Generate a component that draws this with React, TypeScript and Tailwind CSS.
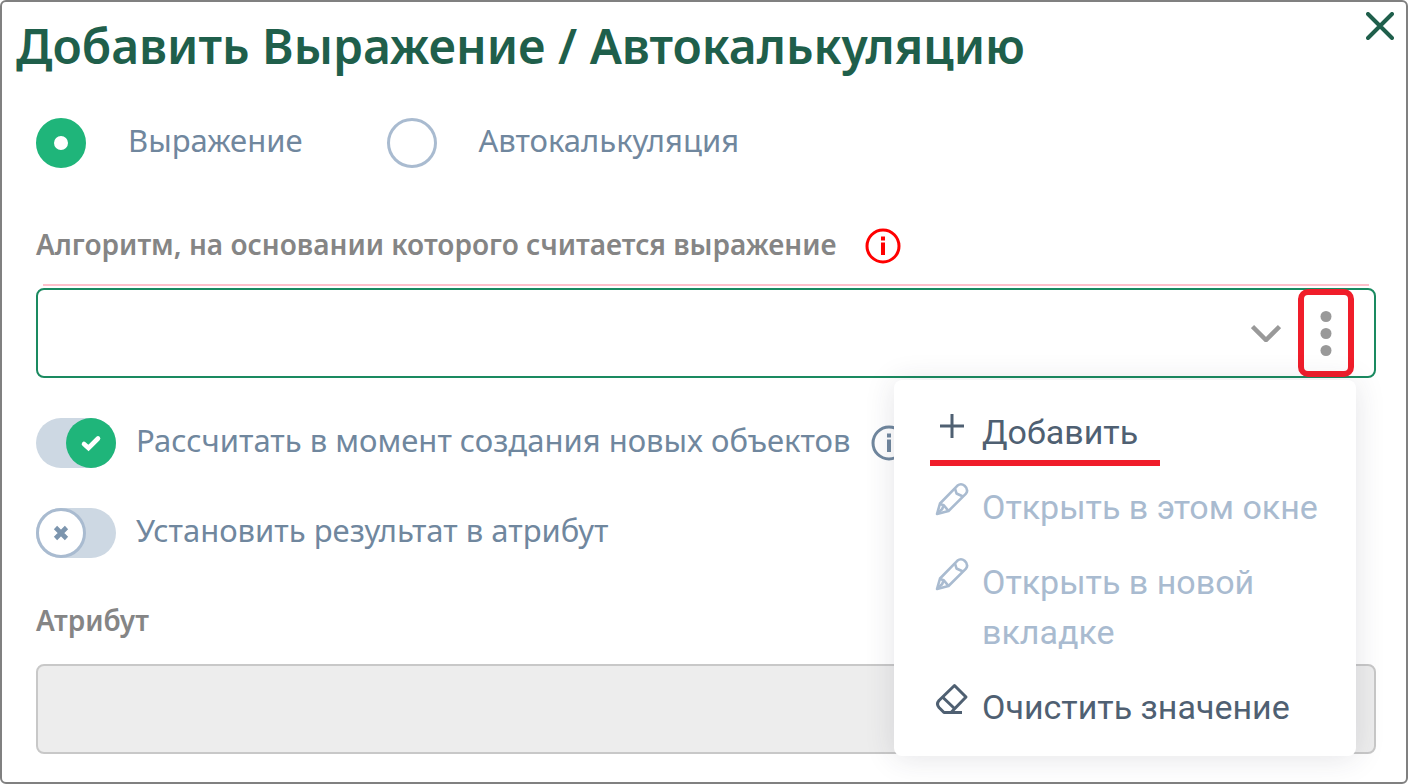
import React, { useState } from 'react';

const InfoIcon: React.FC<{ className: string }> = ({ className }) => (
  <svg viewBox="0 0 36 36" className={className} fill="none" aria-hidden="true">
    <circle cx="18" cy="18" r="16" stroke="currentColor" strokeWidth="3" />
    <path d="M18 14.5V27" stroke="currentColor" strokeWidth="4" />
    <path d="M18 8.5V12.5" stroke="currentColor" strokeWidth="4" />
  </svg>
);

const PlusIcon = () => (
  <svg viewBox="0 0 36 36" className="size-9 shrink-0" fill="none" stroke="currentColor" strokeWidth="3" aria-hidden="true">
    <path d="M18 7V31M6 19H30" />
  </svg>
);

const PencilIcon = () => (
  <svg viewBox="0 0 36 36" className="size-9 shrink-0" fill="none" stroke="currentColor" strokeWidth="2.6" strokeLinejoin="round" aria-hidden="true">
    <path d="M3 32L6 21.5L23.5 3.6Q27 .8 30.6 3.8Q34.8 7.6 32 11.6L14.5 29Z" />
    <path d="M21 6.5L22.5 11.5L29 14.5M6 22L9.8 23.2L14.2 28.6M9.5 23.5L8.2 27L4 31" />
  </svg>
);

const EraserIcon = () => (
  <svg viewBox="0 0 36 36" className="size-9 shrink-0" fill="none" stroke="currentColor" strokeWidth="3" strokeLinejoin="round" aria-hidden="true">
    <path d="M20.5 3.5L32 15L17 30.5H10L5 25.5Q2 22 5 18.5Z" />
    <path d="M9 15.5L20.5 26.5M10 30.5H28" />
  </svg>
);

const MENU = [
  { text: 'Добавить', icon: PlusIcon, disabled: false, marked: true },
  { text: 'Открыть в этом окне', icon: PencilIcon, disabled: true },
  { text: 'Открыть в новой вкладке', icon: PencilIcon, disabled: true },
  { text: 'Очистить значение', icon: EraserIcon, disabled: false },
];

interface RadioProps {
  label: string;
  checked: boolean;
  onChange: () => void;
}

const Radio: React.FC<RadioProps> = ({ label, checked, onChange }) => (
  <label className="flex items-center gap-[42px]">
    <input
      type="radio"
      name="kind"
      checked={checked}
      onChange={onChange}
      className="size-[50px] shrink-0 appearance-none rounded-full border-[3px] border-[#a9bbd0] bg-white checked:border-[18px] checked:border-[#1fb57a]"
    />
    <span className="-mt-1.5 leading-10">{label}</span>
  </label>
);

interface ToggleProps {
  label: string;
  checked: boolean;
  onChange: (value: boolean) => void;
}

const Toggle: React.FC<ToggleProps> = ({ label, checked, onChange }) => (
  <label className="flex items-center gap-5">
    <span className="relative h-[50px] w-20 shrink-0">
      <input
        type="checkbox"
        checked={checked}
        onChange={(e) => onChange(e.target.checked)}
        className="block h-full w-full appearance-none rounded-full bg-[#cdd8e3]"
      />
      {checked ? (
        <svg viewBox="0 0 50 50" className="pointer-events-none absolute top-0 right-0 size-[50px]" fill="none" aria-hidden="true">
          <circle cx="25" cy="25" r="25" fill="#1fb57a" />
          <path d="M18 26L22.5 30L32 20.5" stroke="#fff" strokeWidth="4.6" strokeLinecap="round" />
        </svg>
      ) : (
        <svg viewBox="0 0 50 50" className="pointer-events-none absolute top-0 left-0 size-[50px]" fill="none" aria-hidden="true">
          <circle cx="25" cy="25" r="23.5" fill="#fff" stroke="#a9bbd0" strokeWidth="3" />
          <path d="M19.5 19.5L30.5 30.5M30.5 19.5L19.5 30.5" stroke="#7c95ae" strokeWidth="4.6" />
        </svg>
      )}
    </span>
    <span className="-mt-1.5 leading-10">{label}</span>
  </label>
);

export default function App() {
  const [kind, setKind] = useState('expression');
  const [onCreate, setOnCreate] = useState(true);
  const [toAttribute, setToAttribute] = useState(false);

  return (
    <main className="min-h-screen rounded-md border-2 border-[#808080] bg-white pb-7 font-['Noto_Sans',sans-serif] text-[31px] text-[#70879e]">
      <header className="flex items-start justify-between pt-3 pr-3 pl-3.5">
        <h1 className="text-[48px] leading-16 font-semibold text-[#1f5f4b]">Добавить Выражение / Автокалькуляцию</h1>
        <button type="button" aria-label="Закрыть" className="-mt-0.5 text-[#1f5f4b]">
          <svg viewBox="0 0 28 28" className="size-7" fill="none" stroke="currentColor" strokeWidth="4" strokeLinecap="round">
            <path d="M2 2L26 26M26 2L2 26" />
          </svg>
        </button>
      </header>

      <form className="mt-10 pr-[30px] pl-[34px]">
        <div className="flex gap-21" role="radiogroup">
          <Radio label="Выражение" checked={kind === 'expression'} onChange={() => setKind('expression')} />
          <Radio label="Автокалькуляция" checked={kind === 'auto'} onChange={() => setKind('auto')} />
        </div>

        <div className="mt-15 flex h-9 items-start gap-7">
          <label htmlFor="algorithm" className="text-[28px] leading-8 font-semibold text-[#858585]">
            Алгоритм, на основании которого считается выражение
          </label>
          <InfoIcon className="size-9 shrink-0 text-[#ff0000]" />
        </div>

        <hr className="mx-[7px] mt-5 mb-0.5 border-t-2 border-[#ffc0cb]" />
        <div className="relative">
          <div className="flex h-[90px] items-center rounded-lg border-2 border-[#1a8a60] pr-5">
            <select id="algorithm" className="h-full min-w-0 flex-1 appearance-none bg-transparent px-4 outline-none" />
            <svg viewBox="0 0 30 18" className="pointer-events-none mr-[17px] h-[18px] w-[30px]" fill="none" stroke="#999" strokeWidth="4.5" aria-hidden="true">
              <path d="M1.5 2.5L15 16L28.5 2.5" />
            </svg>
            <button type="button" aria-label="Действия" className="flex h-[88px] w-14 items-center justify-center rounded-[10px] border-6 border-[#f01d2a]">
              <svg viewBox="0 0 12 46" className="h-[46px] w-3" fill="#999">
                <circle cx="6" cy="6.5" r="5.5" />
                <circle cx="6" cy="23.5" r="5.5" />
                <circle cx="6" cy="40.5" r="5.5" />
              </svg>
            </button>
          </div>

          <ul className="absolute top-full right-5 z-10 mt-0.5 flex w-[462px] flex-col gap-[25px] rounded-lg bg-white pt-[27px] pr-7 pb-6 pl-10 font-[Roboto,sans-serif] text-[34px] leading-[50px] text-[#4f6072] shadow-[0_2px_30px_rgba(50,50,70,0.13)]">
            {MENU.map(({ text, icon: Icon, disabled, marked }) => (
              <li key={text} className="relative">
                <button type="button" disabled={disabled} className="flex w-full items-start gap-3 text-left disabled:text-[#a9bbd0]">
                  <Icon />
                  <span>{text}</span>
                </button>
                {marked && <span className="absolute top-full -left-1 mt-[3px] h-1.5 w-[230px] bg-[#f01d2a]" />}
              </li>
            ))}
          </ul>
        </div>

        <div className="mt-10 flex items-center gap-5">
          <Toggle label="Рассчитать в момент создания новых объектов" checked={onCreate} onChange={setOnCreate} />
          <InfoIcon className="size-9 shrink-0" />
        </div>
        <div className="mt-10 flex">
          <Toggle label="Установить результат в атрибут" checked={toAttribute} onChange={setToAttribute} />
        </div>

        <label htmlFor="attribute" className="mt-11 block text-[28px] leading-9 font-semibold text-[#858585]">
          Атрибут
        </label>
        <input
          id="attribute"
          type="text"
          disabled
          className="mt-[26px] block h-[90px] w-full rounded-lg border-2 border-[#c8c8c8] bg-[#ededed] px-4"
        />
      </form>
    </main>
  );
}
